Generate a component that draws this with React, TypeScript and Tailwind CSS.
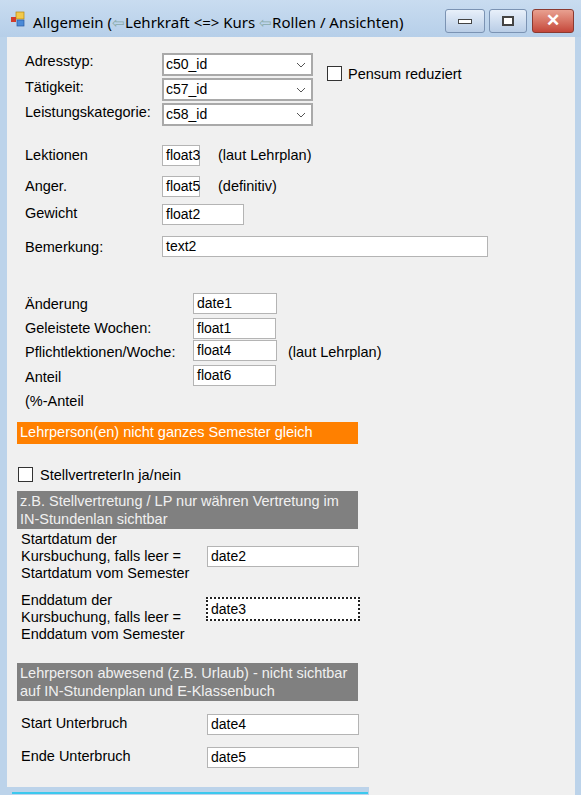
import React from "react";

const font = { fontFamily: '"Liberation Sans", Arial, sans-serif' };

function Label({ x, y, children }: { x: number; y: number; children: React.ReactNode }) {
  return (
    <div className="absolute text-[14.5px] leading-[17px] text-black whitespace-nowrap" style={{ left: x, top: y - 9 }}>
      {children}
    </div>
  );
}

function Box({ x, y, w, h = 21, text, focus }: { x: number; y: number; w: number; h?: number; text: string; focus?: boolean }) {
  return (
    <div
      className={`absolute bg-white text-[14px] flex items-center pl-[3px] text-black ${focus ? "border-2 border-dotted border-[#222]" : "border border-[#b4b4b4]"}`}
      style={{ left: x, top: y, width: w, height: h }}
    >
      {text}
    </div>
  );
}

function Combo({ y, text }: { y: number; text: string }) {
  return (
    <div className="absolute bg-white border-2 border-[#a9a9a9] text-[14px] flex items-center pl-[2px] text-black" style={{ left: 162, top: y, width: 151, height: 23 }}>
      <span className="flex-1">{text}</span>
      <svg width="10" height="6" viewBox="0 0 10 6" className="mr-[5px]">
        <path d="M1 1 L5 5 L9 1" fill="none" stroke="#555" strokeWidth="1" />
      </svg>
    </div>
  );
}

function Check({ x, y }: { x: number; y: number }) {
  return <div className="absolute bg-white border border-[#333]" style={{ left: x, top: y, width: 15, height: 15 }} />;
}

export default function App() {
  return (
    <div className="relative w-[581px] h-[795px] overflow-hidden bg-[#bcd3ea]" style={font}>
      <div className="absolute left-0 top-0 w-[581px] h-[37px] bg-gradient-to-b from-[#c9dcf0] to-[#b6cfe9]">
        <svg className="absolute left-[10px] top-[11px]" width="16" height="16" viewBox="0 0 16 16">
          <rect x="6" y="1" width="8" height="7" fill="#f2c94c" stroke="#b8860b" strokeWidth="0.7" />
          <rect x="1" y="6" width="5" height="5" fill="#d23c2a" />
          <rect x="7" y="9" width="7" height="6" fill="#4a8ad8" stroke="#2a5aa0" strokeWidth="0.7" />
        </svg>
        <div className="absolute left-[33px] top-[12px] text-[15px] text-black whitespace-nowrap" style={{ fontFamily: '"Noto Sans", "Liberation Sans", sans-serif', lineHeight: "20px" }}>
          Allgemein (<span className="text-[#8aa]">⇦</span>Lehrkraft &lt;=&gt; Kurs <span className="text-[#8aa]">⇦</span>Rollen / Ansichten)
        </div>
        <div className="absolute left-[445px] top-[9px] w-[40px] h-[24px] rounded-[3px] border border-[#7b93b3] bg-gradient-to-b from-[#e8f0fa] to-[#b9cde6] flex items-center justify-center">
          <div className="w-[14px] h-[5px] bg-white border border-[#444]" />
        </div>
        <div className="absolute left-[489px] top-[9px] w-[38px] h-[24px] rounded-[3px] border border-[#7b93b3] bg-gradient-to-b from-[#e8f0fa] to-[#b9cde6] flex items-center justify-center">
          <div className="w-[12px] h-[10px] bg-white border-2 border-[#444]" />
        </div>
        <div className="absolute left-[532px] top-[9px] w-[42px] h-[24px] rounded-[3px] border border-[#8b3a30] bg-gradient-to-b from-[#e8a090] to-[#c4463a] flex items-center justify-center text-white font-bold text-[17px]">
          ✕
        </div>
      </div>

      <div className="absolute left-[7px] top-[37px] w-[568px] h-[758px] bg-[#f0f0f0] bg-[radial-gradient(circle_at_1px_1px,#555_0.5px,transparent_0.7px)] bg-[size:8px_8px]" />
      <div className="absolute left-[7px] top-[787px] w-[362px] h-[8px] bg-[#bcd3ea]" />
      <div className="absolute left-[12px] top-[792px] w-[356px] h-[2px] bg-[#3cc8ee]" />

      <Label x={25} y={62}>Adresstyp:</Label>
      <Label x={25} y={88}>Tätigkeit:</Label>
      <Label x={25} y={113}>Leistungskategorie:</Label>
      <Combo y={53} text="c50_id" />
      <Combo y={78} text="c57_id" />
      <Combo y={103} text="c58_id" />
      <Check x={327} y={66} />
      <Label x={348} y={75}>Pensum reduziert</Label>

      <Label x={25} y={156}>Lektionen</Label>
      <Box x={162} y={145} w={38} text="float3" />
      <Label x={218} y={156}>(laut Lehrplan)</Label>
      <Label x={25} y={187}>Anger.</Label>
      <Box x={162} y={176} w={38} text="float5" />
      <Label x={218} y={187}>(definitiv)</Label>
      <Label x={25} y={214}>Gewicht</Label>
      <Box x={162} y={204} w={82} text="float2" />
      <Label x={25} y={248}>Bemerkung:</Label>
      <Box x={162} y={236} w={326} text="text2" />

      <Label x={25} y={305}>Änderung</Label>
      <Box x={193} y={293} w={84} text="date1" />
      <Label x={25} y={329}>Geleistete Wochen:</Label>
      <Box x={193} y={318} w={83} text="float1" />
      <Label x={25} y={353}>Pflichtlektionen/Woche:</Label>
      <Box x={193} y={340} w={84} text="float4" />
      <Label x={288} y={353}>(laut Lehrplan)</Label>
      <Label x={25} y={378}>Anteil</Label>
      <Box x={193} y={365} w={83} text="float6" />
      <Label x={25} y={402}>(%-Anteil</Label>

      <div className="absolute left-[17px] top-[422px] w-[341px] h-[22px] bg-[#ff8000] text-white text-[14.5px] flex items-center pl-[3px]">
        Lehrperson(en) nicht ganzes Semester gleich
      </div>

      <Check x={18} y={467} />
      <Label x={40} y={476}>StellvertreterIn ja/nein</Label>

      <div className="absolute left-[17px] top-[491px] w-[341px] h-[38px] bg-[#808080] text-[#f0f0f0] text-[14.5px] leading-[18px] pl-[3px] pt-[1px]">
        z.B. Stellvertretung / LP nur währen Vertretung im<br />IN-Stundenlan sichtbar
      </div>

      <div className="absolute left-[21px] top-[531px] text-[14.5px] leading-[17px] text-black">
        Startdatum der<br />Kursbuchung, falls leer =<br />Startdatum vom Semester
      </div>
      <Box x={207} y={546} w={152} text="date2" />
      <div className="absolute left-[21px] top-[592px] text-[14.5px] leading-[17px] text-black">
        Enddatum der<br />Kursbuchung, falls leer =<br />Enddatum vom Semester
      </div>
      <Box x={206} y={597} w={154} h={24} text="date3" focus />

      <div className="absolute left-[17px] top-[663px] w-[341px] h-[38px] bg-[#808080] text-[#f0f0f0] text-[14.5px] leading-[18px] pl-[3px] pt-[1px]">
        Lehrperson abwesend (z.B. Urlaub) - nicht sichtbar<br />auf IN-Stundenplan und E-Klassenbuch
      </div>

      <Label x={21} y={724}>Start Unterbruch</Label>
      <Box x={207} y={714} w={152} text="date4" />
      <Label x={21} y={757}>Ende Unterbruch</Label>
      <Box x={207} y={747} w={152} text="date5" />
    </div>
  );
}
